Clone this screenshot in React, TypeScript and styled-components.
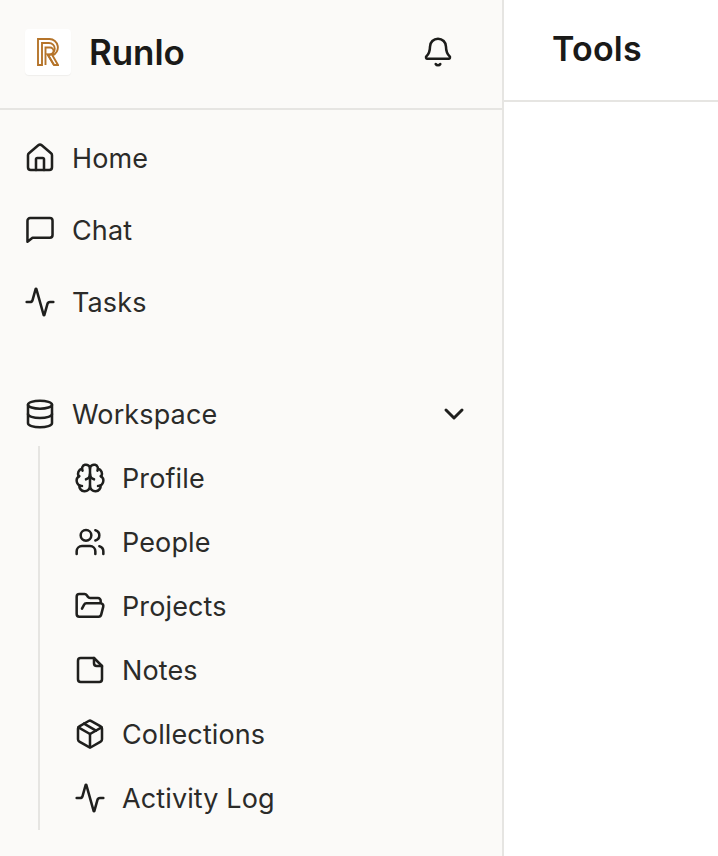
import React from 'react';
import styled, { createGlobalStyle } from 'styled-components';
import {
  Activity,
  Bell,
  Brain,
  ChevronDown,
  Database,
  FolderOpen,
  House,
  Package,
  Users,
  LucideIcon,
} from 'lucide-react';

const GlobalStyle = createGlobalStyle`
  html, body {
    margin: 0;
    padding: 0;
    height: 100%;
    background: #ffffff;
    font-family: 'Inter', 'Liberation Sans', sans-serif;
    color: #1c1c1a;
    overflow: hidden;
  }
  #root {
    height: 100%;
  }
`;

const Shell = styled.div`
  display: flex;
  width: 718px;
  height: 856px;
`;

const Sidebar = styled.aside`
  flex: 0 0 504px;
  box-sizing: border-box;
  background: #fbfaf8;
  border-right: 2px solid #e6e5e2;
`;

const SidebarHeader = styled.header`
  display: flex;
  align-items: center;
  justify-content: space-between;
  box-sizing: border-box;
  height: 110px;
  padding: 0 48px 4px 25px;
  border-bottom: 2px solid #e6e5e2;
`;

const Brand = styled.div`
  display: flex;
  align-items: center;
  gap: 18px;
`;

const LogoTile = styled.div`
  display: flex;
  align-items: center;
  justify-content: center;
  width: 46px;
  height: 46px;
  background: #ffffff;
  border-radius: 4px;
  box-shadow: 0 1px 1px rgba(0, 0, 0, 0.05);
`;

const BrandName = styled.span`
  font-size: 35px;
  font-weight: 600;
  letter-spacing: -0.1px;
  color: #1a1a18;
`;

const BellButton = styled.button`
  display: flex;
  padding: 0;
  border: 0;
  background: none;
  color: #1c1c1a;
`;

const Nav = styled.nav`
  display: flex;
  flex-direction: column;
  padding-top: 12px;
`;

const Row = styled.div`
  display: flex;
  align-items: center;
  gap: 16px;
  height: 72px;
  padding-left: 24px;
  font-size: 27px;
  letter-spacing: 0.12px;
  color: #2b2b29;
  svg {
    color: #1f1f1d;
  }
`;

const GroupRow = styled(Row)`
  justify-content: space-between;
  margin-top: 40px;
  padding-right: 32px;
`;

const GroupLabel = styled.div`
  display: flex;
  align-items: center;
  gap: 16px;
`;

const SubList = styled.div`
  display: flex;
  flex-direction: column;
  margin: -4px 0 0 38px;
  border-left: 2px solid #e6e5e2;
`;

const SubRow = styled(Row)`
  height: 64px;
  padding-left: 34px;
`;

const Main = styled.main`
  flex: 1;
`;

const MainHeader = styled.header`
  display: flex;
  align-items: center;
  box-sizing: border-box;
  height: 102px;
  padding: 0 0 4px 48px;
  border-bottom: 2px solid #e6e5e2;
`;

const MainTitle = styled.h1`
  margin: 0;
  font-size: 34px;
  font-weight: 600;
  letter-spacing: 0.2px;
  color: #1a1a18;
`;

const ChatIcon = (() => (
  <svg width={32} height={32} viewBox="0 0 24 24" fill="none" stroke="currentColor" strokeWidth={1.9} strokeLinecap="round" strokeLinejoin="round">
    <path d="M2.6 5a2 2 0 0 1 2-2h14.8a2 2 0 0 1 2 2v10.8a2 2 0 0 1-2 2H6.4l-3.8 3z" />
  </svg>
)) as unknown as LucideIcon;

const NoteIcon = (() => (
  <svg width={32} height={32} viewBox="0 0 24 24" fill="none" stroke="currentColor" strokeWidth={1.9} strokeLinecap="round" strokeLinejoin="round">
    <path d="M15 3H5a2 2 0 0 0-2 2v14a2 2 0 0 0 2 2h14a2 2 0 0 0 2-2V9z" />
    <path d="M15 3v4a2 2 0 0 0 2 2h4" />
  </svg>
)) as unknown as LucideIcon;

const topItems: [LucideIcon, string][] = [
  [House, 'Home'],
  [ChatIcon, 'Chat'],
  [Activity, 'Tasks'],
];

const subItems: [LucideIcon, string][] = [
  [Brain, 'Profile'],
  [Users, 'People'],
  [FolderOpen, 'Projects'],
  [NoteIcon, 'Notes'],
  [Package, 'Collections'],
  [Activity, 'Activity Log'],
];

const Logo = () => (
  <svg width="22" height="28" viewBox="0 0 22 28" fill="none" stroke="#b5742a" strokeWidth="1.9">
    <path d="M1 1h11.5a8.5 8.5 0 0 1 3 16.4l5.5 9.6h-4l-6.5-10.5h1.5a5.5 5.5 0 0 0 0-11.5H5v22H1z" />
    <path d="M8.5 27V9.5h4.5a3.6 3.6 0 0 1 0 7.2h-2l6 10.3" />
  </svg>
);

export default function App() {
  return (
    <>
      <GlobalStyle />
      <Shell>
        <Sidebar>
          <SidebarHeader>
            <Brand>
              <LogoTile>
                <Logo />
              </LogoTile>
              <BrandName>Runlo</BrandName>
            </Brand>
            <BellButton>
              <Bell size={32} strokeWidth={1.9} />
            </BellButton>
          </SidebarHeader>
          <Nav>
            {topItems.map(([Icon, label]) => (
              <Row key={label}>
                <Icon size={32} strokeWidth={1.9} />
                {label}
              </Row>
            ))}
            <GroupRow>
              <GroupLabel>
                <Database size={32} strokeWidth={1.9} />
                Workspace
              </GroupLabel>
              <ChevronDown size={32} strokeWidth={2.25} />
            </GroupRow>
            <SubList>
              {subItems.map(([Icon, label]) => (
                <SubRow key={label}>
                  <Icon size={32} strokeWidth={1.9} />
                  {label}
                </SubRow>
              ))}
            </SubList>
          </Nav>
        </Sidebar>
        <Main>
          <MainHeader>
            <MainTitle>Tools</MainTitle>
          </MainHeader>
        </Main>
      </Shell>
    </>
  );
}
